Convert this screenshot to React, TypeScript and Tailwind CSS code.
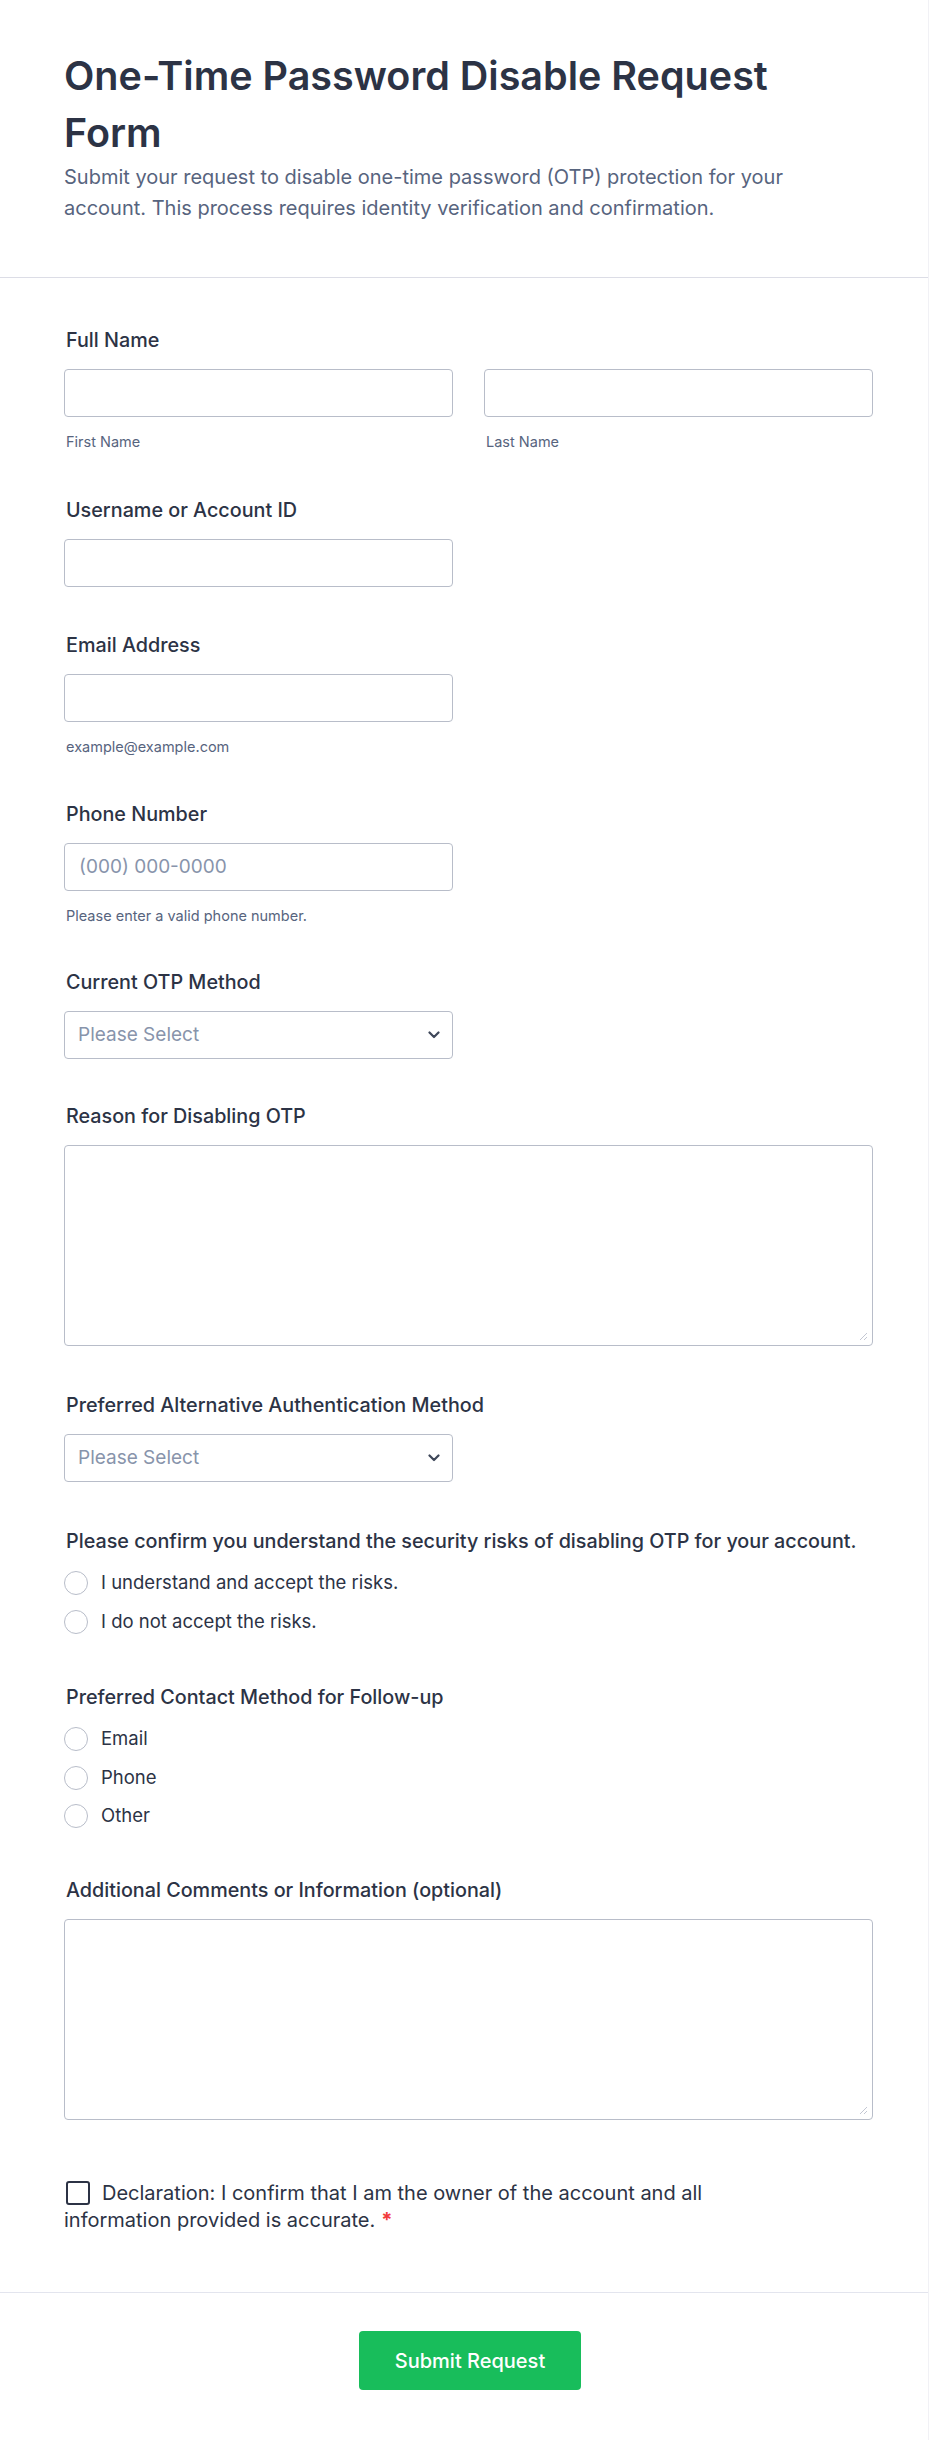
import React from "react";

const font = { fontFamily: "Inter, 'Noto Sans', sans-serif" };

function Label({ children }: { children: React.ReactNode }) {
  return (
    <div className="text-[19.75px] leading-[24px] font-medium text-[#2c3345] mb-[17px] pl-[2px] whitespace-nowrap">
      {children}
    </div>
  );
}

function Hint({ children }: { children: React.ReactNode }) {
  return <div className="mt-[17px] text-[14.5px] leading-[16px] text-[#57647e] pl-[2px]">{children}</div>;
}

function Input({ placeholder, className = "" }: { placeholder?: string; className?: string }) {
  return (
    <div
      className={`h-[48px] rounded-[4px] border border-[#b8bdc9] bg-white flex items-center px-[14px] text-[19px] text-[#8894ab] ${className}`}
    >
      {placeholder}
    </div>
  );
}

function Select() {
  return (
    <div className="h-[48px] w-[389px] rounded-[4px] border border-[#b8bdc9] bg-white flex items-center justify-between pl-[13px] pr-[12px] text-[19px] text-[#8894ab]">
      <span>Please Select</span>
      <svg width="12" height="8" viewBox="0 0 12 8" fill="none">
        <path d="M1.5 1.5 L6 6 L10.5 1.5" stroke="#3e4759" strokeWidth="2.2" strokeLinecap="round" strokeLinejoin="round" />
      </svg>
    </div>
  );
}

function TextArea() {
  return (
    <div className="relative h-[201px] w-full rounded-[4px] border border-[#b8bdc9] bg-white">
      <svg className="absolute right-[4px] bottom-[4px]" width="9" height="9" viewBox="0 0 9 9">
        <path d="M1 8 L8 1 M5 8 L8 5" stroke="#c3c7d3" strokeWidth="1" />
      </svg>
    </div>
  );
}

function Radio({ label }: { label: string }) {
  return (
    <div className="flex items-center h-[24px]">
      <div className="w-[24px] h-[24px] rounded-full border border-[#b8bdc9] bg-white shrink-0" />
      <span className="ml-[13px] text-[18.5px] text-[#2c3345] whitespace-nowrap">{label}</span>
    </div>
  );
}

export default function App() {
  return (
    <div className="w-[930px] bg-white" style={font}>
      <div className="w-[929px] bg-white border-r border-[#f1f1f5]">
        <div className="px-[64px] pt-[48px] pb-[53px] border-b border-[#dcdde6]">
          <h1 className="text-[39.5px] leading-[57px] font-semibold text-[#2c3345] w-[760px]">
            One-Time Password Disable Request Form
          </h1>
          <p className="text-[20px] leading-[31px] text-[#57647e] w-[760px]">
            Submit your request to disable one-time password (OTP) protection for your account. This process requires
            identity verification and confirmation.
          </p>
        </div>

        <div className="pl-[64px] pr-[55px] pt-[50px] pb-[58px]">
          <div>
            <Label>Full Name</Label>
            <div className="grid grid-cols-2 gap-[31px]">
              <div>
                <Input />
                <div className="mt-[17px] text-[14.5px] leading-[16px] text-[#57647e] pl-[2px]">First Name</div>
              </div>
              <div>
                <Input />
                <div className="mt-[17px] text-[14.5px] leading-[16px] text-[#57647e] pl-[2px]">Last Name</div>
              </div>
            </div>
          </div>

          <div className="mt-[48px]">
            <Label>Username or Account ID</Label>
            <Input className="w-[389px]" />
          </div>

          <div className="mt-[46px]">
            <Label>Email Address</Label>
            <Input className="w-[389px]" />
            <Hint>example@example.com</Hint>
          </div>

          <div className="mt-[47px]">
            <Label>Phone Number</Label>
            <Input className="w-[389px]" placeholder="(000) 000-0000" />
            <Hint>Please enter a valid phone number.</Hint>
          </div>

          <div className="mt-[46px]">
            <Label>Current OTP Method</Label>
            <Select />
          </div>

          <div className="mt-[45px]">
            <Label>Reason for Disabling OTP</Label>
            <TextArea />
          </div>

          <div className="mt-[47px]">
            <Label>Preferred Alternative Authentication Method</Label>
            <Select />
          </div>

          <div className="mt-[47px]">
            <Label>Please confirm you understand the security risks of disabling OTP for your account.</Label>
            <div className="flex flex-col gap-[15px] mt-[18px]">
              <Radio label="I understand and accept the risks." />
              <Radio label="I do not accept the risks." />
            </div>
          </div>

          <div className="mt-[51px]">
            <Label>Preferred Contact Method for Follow-up</Label>
            <div className="flex flex-col gap-[14.5px] mt-[18px]">
              <Radio label="Email" />
              <Radio label="Phone" />
              <Radio label="Other" />
            </div>
          </div>

          <div className="mt-[50px]">
            <Label>Additional Comments or Information (optional)</Label>
            <TextArea />
          </div>

          <div className="mt-[60px] w-[680px] text-[20px] leading-[27px] text-[#2c3345]">
            <span className="inline-block align-[-5px] w-[24px] h-[24px] rounded-[3px] border-2 border-[#2c3345] ml-[2px] mr-[12px]" />
            Declaration: I confirm that I am the owner of the account and all information provided is accurate.
            <span className="text-[#f23a3c] ml-[6px] font-bold">*</span>
          </div>
        </div>

        <div className="border-t border-[#e3e5ee] pt-[38px] pb-[50px] flex justify-center pl-[12px]">
          <button className="w-[222px] h-[59px] rounded-[4px] bg-[#18bd5b] text-white text-[20px] font-medium">
            Submit Request
          </button>
        </div>
      </div>
    </div>
  );
}
